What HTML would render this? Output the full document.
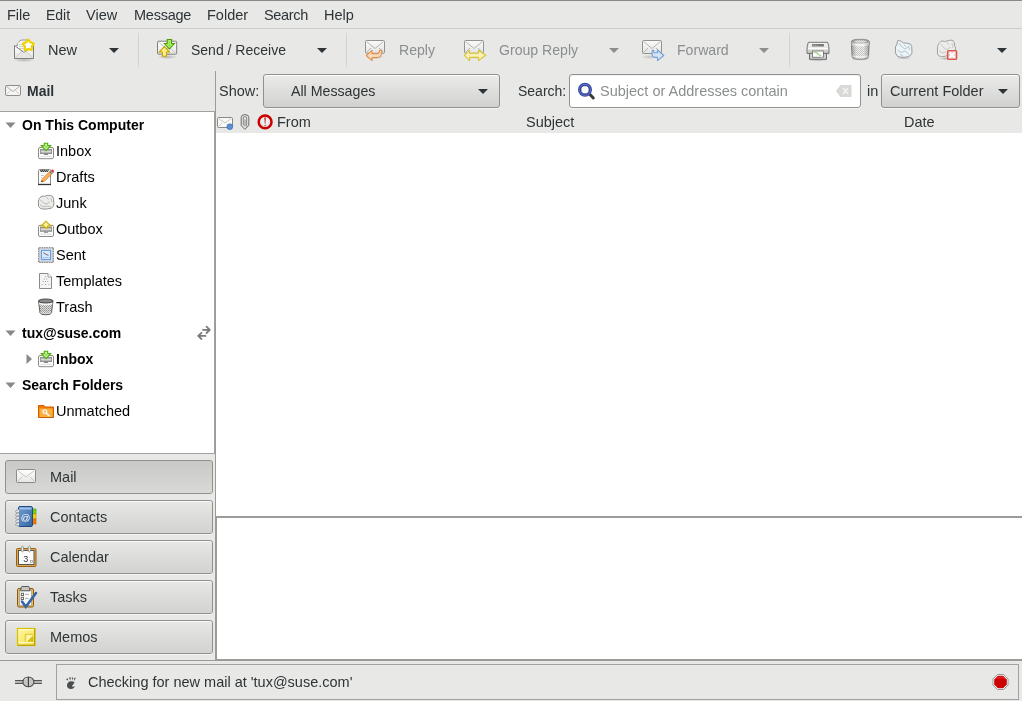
<!DOCTYPE html>
<html><head><meta charset="utf-8">
<style>
*{margin:0;padding:0;box-sizing:border-box}
html,body{width:1022px;height:701px;overflow:hidden;background:#e8e8e7;font-family:"Liberation Sans",sans-serif;font-size:14.5px;color:#2e3436}
.a{position:absolute}
svg.a{overflow:visible}
.t{position:absolute;white-space:nowrap;line-height:17px;will-change:transform}
.b{font-weight:bold;font-size:14px}
.dis{color:#8b8e8f;font-size:14.1px}
.k{color:#000}
.combo{position:absolute;border:1px solid #90928d;border-radius:3px;background:linear-gradient(#ebebea 0px,#e6e6e5 20%,#d1d1cf 100%);box-shadow:inset 0 1px 0 #fdfdfd,0 1px 0 rgba(255,255,255,.55)}
.btn{position:absolute;left:5px;width:208px;height:34px;border:1px solid #90928d;border-radius:3px;background:linear-gradient(#eaeae9,#e4e4e3 15%,#d2d2d0);box-shadow:inset 0 1px 0 #fbfbfb,0 1px 0 rgba(255,255,255,.55)}
.btn.on{background:linear-gradient(#c9c9c6,#d9d9d7);box-shadow:none}
.tri{position:absolute;width:0;height:0;border-left:5px solid transparent;border-right:5px solid transparent;border-top:5px solid #2e3436}
.tri.g{border-top-color:#8b8e8f}
</style></head><body>
<div class="a" style="left:0;top:0;width:1022px;height:1px;background:#8a8a8a"></div>
<!-- MENUBAR -->
<div class="t" style="left:7px;top:7px">File</div>
<div class="t" style="left:46px;top:7px;font-size:14px">Edit</div>
<div class="t" style="left:86px;top:7px">View</div>
<div class="t" style="left:134px;top:7px;letter-spacing:-0.25px">Message</div>
<div class="t" style="left:207px;top:7px">Folder</div>
<div class="t" style="left:264px;top:7px;letter-spacing:-0.35px">Search</div>
<div class="t" style="left:324px;top:7px">Help</div>
<div class="a" style="left:0;top:28px;width:1022px;height:1px;background:#cdcdcb"></div>

<!-- TOOLBAR -->
<div class="t" style="left:48px;top:42px">New</div>
<div class="tri" style="left:109px;top:48px"></div>
<div class="a" style="left:138px;top:33px;width:1px;height:34px;background:#d3d3d1"></div>
<div class="t" style="left:191px;top:42px;font-size:14px">Send / Receive</div>
<div class="tri" style="left:317px;top:48px"></div>
<div class="a" style="left:346px;top:33px;width:1px;height:34px;background:#d3d3d1"></div>
<div class="t dis" style="left:399px;top:42px">Reply</div>
<div class="t dis" style="left:499px;top:42px">Group Reply</div>
<div class="tri g" style="left:609px;top:48px"></div>
<div class="t dis" style="left:677px;top:42px">Forward</div>
<div class="tri g" style="left:759px;top:48px"></div>
<div class="a" style="left:789px;top:33px;width:1px;height:34px;background:#d3d3d1"></div>
<div class="tri" style="left:997px;top:48px"></div>

<!-- NEW icon: viewBox origin = (8,34) -->
<svg class="a" style="left:8px;top:34px" width="32" height="32" viewBox="0 0 32 32">
 <defs><linearGradient id="envg" x1="0" y1="0" x2="0" y2="1"><stop offset="0" stop-color="#ffffff"/><stop offset="1" stop-color="#e4e4e2"/></linearGradient>
 <radialGradient id="shd" cx="0.5" cy="0.5" r="0.5"><stop offset="0" stop-color="#000" stop-opacity=".22"/><stop offset="1" stop-color="#000" stop-opacity="0"/></radialGradient></defs>
 <ellipse cx="16" cy="26" rx="11" ry="2.2" fill="url(#shd)"/>
 <path d="M8.5 11.5 L12 6.5 Q13 6 15 6 L20 6 L22 8 L23.5 11.5 Z" fill="#f3f3f2" stroke="#9a9a98" stroke-width="1"/>
 <rect x="10" y="8.5" width="11" height="8" fill="#fafafa"/>
 <path d="M11 10.5 H19 M11 12.5 H19 M11 14.5 H17" stroke="#c8c8c6" stroke-width="0.8"/>
 <path d="M6.5 11.5 L16 18.5 L25.5 11.5 L25.5 24.5 L6.5 24.5 Z" fill="url(#envg)" stroke="#7f7f7d" stroke-width="1" stroke-linejoin="round"/>
 <path d="M7.5 23.5 L13.5 17.5 M24.5 23.5 L18.5 17.5" stroke="#c9c9c7" stroke-width="1"/>
 <path d="M10 22.5 L13 18.5 L19 18.5 L22 22.5 Z" fill="#e6e6e4"/>
 <path d="M20.30 5.80 L22.42 8.49 L25.63 9.67 L23.72 12.51 L23.59 15.93 L20.30 15.00 L17.01 15.93 L16.88 12.51 L14.97 9.67 L18.18 8.49 Z" fill="#fff" stroke="#edd400" stroke-width="2.4" stroke-linejoin="round"/>
 <path d="M20.30 7.20 L21.59 9.62 L24.29 10.10 L22.39 12.08 L22.77 14.80 L20.30 13.60 L17.83 14.80 L18.21 12.08 L16.31 10.10 L19.01 9.62 Z" fill="#fff"/>
</svg>
<!-- SEND/RECEIVE icon: origin (152,34) -->
<svg class="a" style="left:152px;top:34px" width="32" height="32" viewBox="0 0 32 32">
 <ellipse cx="15.5" cy="23" rx="10" ry="2.2" fill="url(#shd)"/>
 <rect x="5.5" y="7.2" width="19.2" height="13" rx="1" fill="url(#envg)" stroke="#7f7f7d" stroke-width="1"/>
 <path d="M6.5 8.2 L15 15 L23.7 8.2 M6.5 19.2 L12 14 M23.7 19.2 L18 14" fill="none" stroke="#bdbdbb" stroke-width="0.8"/>
 <path d="M15.2 5.5 L19.6 5.5 L19.6 9.5 L22.4 9.5 L17.4 15 L12.4 9.5 L15.2 9.5 Z" fill="#8ae234" stroke="#4e9a06" stroke-width="1.1" stroke-linejoin="miter"/><path d="M16.4 6.7 H18.4 V10.7 H19.8 L17.4 13.3 L15 10.7 H16.4 Z" fill="none" stroke="#c4f59a" stroke-width="0.7"/>
 <path d="M10.4 22.2 L14.4 22.2 L14.4 18 L17.4 18 L12.4 12.6 L7.4 18 L10.4 18 Z" fill="#fce94f" stroke="#c4a000" stroke-width="1.1" stroke-linejoin="miter"/><path d="M11.6 21 H13.2 V16.8 H14.7 L12.4 14.3 L10.1 16.8 H11.6 Z" fill="none" stroke="#fffbd0" stroke-width="0.7"/>
</svg>
<!-- REPLY icon: origin (358,34) -->
<svg class="a" style="left:358px;top:34px;opacity:.8" width="32" height="32" viewBox="0 0 32 32">
 <ellipse cx="17" cy="23" rx="10" ry="2" fill="url(#shd)"/>
 <rect x="7.5" y="6.5" width="19" height="12.8" rx="1" fill="url(#envg)" stroke="#7f7f7d" stroke-width="1"/>
 <path d="M8.5 7.5 L17 14.5 L25.5 7.5 M8.5 18.5 L13 14 M25.5 18.5 L21 14" fill="none" stroke="#a8a8a6" stroke-width="1"/>
 <path d="M8.3 21.5 L14 16.3 L14 19.6 L19.5 19.6 Q21.5 19.6 21.5 16.5 L23.8 16 Q24.2 23.6 19 23.6 L14 23.6 L14 26.6 Z" fill="#fcd9b4" stroke="#e07b2a" stroke-width="1.1" stroke-linejoin="round"/>
</svg>
<!-- GROUP REPLY icon: origin (458,34) -->
<svg class="a" style="left:458px;top:34px;opacity:.8" width="32" height="32" viewBox="0 0 32 32">
 <ellipse cx="16" cy="23" rx="10" ry="2" fill="url(#shd)"/>
 <rect x="6.5" y="6.5" width="19" height="12.8" rx="1" fill="url(#envg)" stroke="#7f7f7d" stroke-width="1"/>
 <path d="M7.5 7.5 L16 14.5 L24.5 7.5 M7.5 18.5 L12 14 M24.5 18.5 L20 14" fill="none" stroke="#a8a8a6" stroke-width="1"/>
 <path d="M6.3 21.3 L11.5 16.3 L11.5 19.3 L20.5 19.3 L20.5 16.3 L27.7 21.3 L20.5 26.6 L20.5 23.4 L11.5 23.4 L11.5 26.6 Z" fill="#fdf2a8" stroke="#d8bc10" stroke-width="1.1" stroke-linejoin="round"/>
</svg>
<!-- FORWARD icon: origin (636,34) -->
<svg class="a" style="left:636px;top:34px;opacity:.8" width="32" height="32" viewBox="0 0 32 32">
 <ellipse cx="14" cy="23" rx="9" ry="2" fill="url(#shd)"/>
 <rect x="6.5" y="6.5" width="19" height="13" rx="1" fill="url(#envg)" stroke="#7f7f7d" stroke-width="1"/>
 <path d="M7.5 7.5 L16 14.5 L24.5 7.5 M7.5 18.5 L12 14 M24.5 18.5 L20 14" fill="none" stroke="#a8a8a6" stroke-width="1"/>
 <path d="M27.8 21.5 L21.5 15.8 L21.5 18.8 L18.5 18.8 Q17.2 18.5 17.8 16.3 L16.2 16.5 Q15 23.4 19.5 23.4 L21.5 23.4 L21.5 26.6 Z" fill="#d2e2f6" stroke="#5b8fd6" stroke-width="1.1" stroke-linejoin="round"/>
</svg>
<!-- PRINT icon origin (800,34) -->
<svg class="a" style="left:800px;top:34px" width="80" height="32" viewBox="800 34 80 32">
 <defs>
  <linearGradient id="prg" x1="0" y1="0" x2="0" y2="1"><stop offset="0" stop-color="#f4f4f2"/><stop offset="0.5" stop-color="#e4e4e2"/><stop offset="1" stop-color="#b8b8b6"/></linearGradient>
  <pattern id="mesh" width="2" height="2" patternUnits="userSpaceOnUse"><rect width="2" height="2" fill="#ececea"/><rect width="1" height="1" fill="#c2c2c0"/><rect x="1" y="1" width="1" height="1" fill="#cacac8"/></pattern>
  <linearGradient id="trg" x1="0" y1="0" x2="1" y2="0"><stop offset="0" stop-color="#000" stop-opacity=".25"/><stop offset="0.3" stop-color="#000" stop-opacity="0"/><stop offset="0.7" stop-color="#000" stop-opacity="0"/><stop offset="1" stop-color="#000" stop-opacity=".25"/></linearGradient>
 </defs>
 <ellipse cx="818" cy="60" rx="10" ry="1.6" fill="url(#shd)"/>
 <path d="M809.5 53 H826.5 V59.3 H809.5 Z" fill="#d0d0ce" stroke="#6a6a68" stroke-width="1"/>
 <path d="M808.3 42.3 H827.7 Q829 46 829 49 V53.5 H807 V49 Q807 46 808.3 42.3 Z" fill="url(#prg)" stroke="#767674" stroke-width="1"/>
 <rect x="812" y="44" width="12" height="2.6" rx="0.5" fill="#7a7a78"/>
 <path d="M813.2 45.3 h0.8 M815.2 45.3 h0.8 M817.2 45.3 h0.8" stroke="#cfcfcd" stroke-width="0.9"/>
 <path d="M808 48.5 H828" stroke="#fbfbfa" stroke-width="1.6"/>
 <rect x="812.3" y="51" width="11" height="6.2" fill="#fafafa" stroke="#4a4a48" stroke-width="0.6"/>
 <path d="M813.5 52.2 L816.5 52.5 L818.5 54.5 L821 56" stroke="#9bd47a" stroke-width="1.1" fill="none"/>
 <rect x="820.6" y="57" width="1.8" height="1" fill="#8bb5e8"/>
</svg>
<!-- TRASH icon -->
<svg class="a" style="left:800px;top:34px" width="80" height="32" viewBox="800 34 80 32">
 <ellipse cx="860.3" cy="59" rx="9.5" ry="1.8" fill="url(#shd)"/>
 <path d="M851.3 42 Q851.3 39.3 860.3 39.3 Q869.3 39.3 869.3 42 L868.5 56.8 Q868.2 59.3 860.3 59.3 Q852.3 59.3 852.1 56.8 Z" fill="url(#mesh)" stroke="#8a8a88" stroke-width="1"/>
 <path d="M851.6 42 Q860.3 44.2 869 42 V45.6 Q860.3 47.2 851.6 45.6 Z" fill="#f4f4f2"/>
 <ellipse cx="860.3" cy="41.6" rx="8.2" ry="1.6" fill="url(#mesh)" stroke="#9a9a98" stroke-width="0.6"/>
 <path d="M852 56 Q860.3 58 868.5 56" stroke="#f4f4f2" stroke-width="1.5" fill="none"/>
 <path d="M851.3 42 Q851.3 39.3 860.3 39.3 Q869.3 39.3 869.3 42 L868.5 56.8 Q868.2 59.3 860.3 59.3 Q852.3 59.3 852.1 56.8 Z" fill="url(#trg)"/>
</svg>
<!-- JUNK icon -->
<svg class="a" style="left:880px;top:34px" width="80" height="32" viewBox="880 34 80 32">
 <ellipse cx="904" cy="58" rx="8" ry="1.6" fill="url(#shd)"/>
 <path d="M897.5 40.8 Q899.5 39.8 901 41.3 L903.5 43 Q907 42.8 910.5 44.2 Q912.3 46 911.8 49 L912 53 Q911 56.5 906 57.2 L900 57.2 Q896 56.5 895.6 53 L895.4 47 Q895.5 45.5 896.8 45.2 Z" fill="#eef3f5" stroke="#8e9496" stroke-width="0.9" stroke-linejoin="round"/>
 <path d="M899 43 L902 47 L905 49 L908 47 M897.5 50 L901 52.5 L905 51 L909 54 M904 45 L906 46.5 M900 54.5 L903 55.5 M908.5 45.5 L909.5 50" stroke="#9cc0d0" stroke-width="0.8" fill="none"/>
 <ellipse cx="946" cy="58.5" rx="8" ry="1.6" fill="url(#shd)"/>
 <path d="M941 41.3 Q943 40.5 944.5 41.5 L947 41 Q950.5 39.5 953 40.5 Q955 42.5 954.5 45 L955.5 48 Q956 52 953 54 L944 56.5 Q938.5 57 937.5 54 L937.4 49 Q937.4 45 939 43.3 Z" fill="#ececea" stroke="#9a9a98" stroke-width="0.9" stroke-linejoin="round"/>
 <path d="M941 44 L944 48 L947 49.5 L951 47 M939 51 L943 53 L946 52 M947 42.5 L949 45 M952 43 L953 48" stroke="#c0c0be" stroke-width="0.8" fill="none"/>
 <rect x="947.6" y="50.6" width="9" height="8.8" rx="1" fill="#f3c6c2" stroke="#d9534f" stroke-width="1.4"/>
 <path d="M949.5 52.5 L954.7 57.5 M954.7 52.5 L949.5 57.5" stroke="#fff" stroke-width="2"/>
</svg>

<!-- SIDEBAR -->
<svg class="a" style="left:5px;top:85px" width="16" height="11" viewBox="0 0 16 11"><rect x="0.5" y="0.5" width="15" height="10" rx="1" fill="#f4f4f3" stroke="#8e8e8c"/><path d="M1 1 L8 6.5 L15 1" fill="none" stroke="#b0b0ae"/><path d="M1 10 L5.5 5.5 M15 10 L10.5 5.5" stroke="#d0d0ce"/></svg>
<div class="t b" style="left:27px;top:83px">Mail</div>
<div class="a" style="left:0;top:111px;width:215px;height:1px;background:#a1a19f"></div>
<div class="a" style="left:0;top:112px;width:214px;height:341px;background:#fff"></div>
<div class="a" style="left:214px;top:112px;width:1px;height:342px;background:#a1a19f"></div>
<div class="a" style="left:0;top:453px;width:215px;height:1px;background:#a1a19f"></div>
<div class="a" style="left:215px;top:71px;width:1px;height:589px;background:#9a9c98"></div>

<div class="t b k" style="left:22px;top:117px">On This Computer</div>
<div class="t k" style="left:56px;top:143px">Inbox</div>
<div class="t k" style="left:56px;top:169px">Drafts</div>
<div class="t k" style="left:56px;top:195px">Junk</div>
<div class="t k" style="left:56px;top:221px">Outbox</div>
<div class="t k" style="left:56px;top:247px">Sent</div>
<div class="t k" style="left:56px;top:273px">Templates</div>
<div class="t k" style="left:56px;top:299px">Trash</div>
<div class="t b k" style="left:22px;top:325px">tux@suse.com</div>
<div class="t b k" style="left:56px;top:351px">Inbox</div>
<div class="t b k" style="left:22px;top:377px">Search Folders</div>
<div class="t k" style="left:56px;top:403px">Unmatched</div>

<svg class="a" style="left:0;top:100px" width="215" height="330" viewBox="0 100 215 330">
 <defs>
  <linearGradient id="trayg" x1="0" y1="0" x2="0" y2="1"><stop offset="0" stop-color="#fafafa"/><stop offset="1" stop-color="#dcdcda"/></linearGradient>
  <pattern id="mesh2" width="2" height="2" patternUnits="userSpaceOnUse"><rect width="2" height="2" fill="#e2e2e0"/><rect width="1" height="1" fill="#8e8e8c"/><rect x="1" y="1" width="1" height="1" fill="#a6a6a4"/></pattern>
 </defs>
 <!-- expanders -->
 <path d="M5.5 122.5 L15.5 122.5 L10.5 128 Z" fill="#888a85"/>
 <path d="M5.5 330.5 L15.5 330.5 L10.5 336 Z" fill="#888a85"/>
 <path d="M5.5 382.5 L15.5 382.5 L10.5 388 Z" fill="#888a85"/>
 <path d="M26.5 354 L32 359 L26.5 364 Z" fill="#888a85"/>
 <!-- Inbox -->
 <g id="inbox">
  <rect x="38.5" y="147.5" width="15" height="11.2" rx="1.5" fill="#fdfdfd" stroke="#8a8a88"/>
  <rect x="40" y="149" width="12" height="5" fill="#8e8e8c"/>
  <rect x="40.8" y="150.4" width="10.4" height="2.2" fill="#d6d6d4"/>
  <rect x="44" y="154" width="4" height="0.9" fill="#7a7a78"/>
  <path d="M40.5 156.3 H51.5" stroke="#d8d8d6" stroke-width="0.9"/>
  <path d="M44.3 143.3 H47.7 V145.6 H50.7 L46 150.6 L41.3 145.6 H44.3 Z" fill="#c6f2a0" stroke="#4fae0a" stroke-width="1.1"/>
  <circle cx="46" cy="147" r="1" fill="#8ae234"/>
 </g>
 <!-- Drafts -->
 <path d="M38.5 184.5 V170.5 Q38.5 169.5 40 169.5 H49.5 Q50.5 169.5 50.5 170.5 V184.5" fill="#fbfbfb" stroke="#8a8c88" stroke-width="1"/>
 <path d="M38 184.5 H51" stroke="#2e3436" stroke-width="1.3"/>
 <path d="M40.5 170 L41.3 172 L42.3 170 L43.3 172 L44.3 170 L45.3 172 L46.3 170 L47.3 172 L48.3 170" stroke="#3a3a38" stroke-width="1" fill="none"/>
 <path d="M41 175.5 H44 M41 177.5 H42" stroke="#b8b8b6" stroke-width="0.8"/>
 <path d="M41.3 182 L42.3 179 L49.5 171.8 L51.7 174 L44.5 181.2 Z" fill="#f9b360" stroke="#d46d10" stroke-width="0.7"/>
 <path d="M49.5 171.8 L51 170.3 L53.2 172.5 L51.7 174 Z" fill="#9a9a98" stroke="#6a6a68" stroke-width="0.5"/>
 <path d="M51 170.3 Q52.3 168.8 53.5 170 Q54.7 171.2 53.2 172.5 Z" fill="#ef2929"/>
 <path d="M41.3 182 L41.9 180.2 L43.1 181.4 Z" fill="#2e3436"/>
 <!-- Junk -->
 <path d="M40 197.5 Q42 195.3 44.5 196.3 L46.5 195.5 Q50 194.7 52.5 196.3 Q54.2 198.5 53.6 201 L54 203.5 Q54 207 51 208.3 L45 209.2 Q39.8 209.4 38.6 206.5 L38.4 202 Q38.3 199.3 40 197.5 Z" fill="#ececea" stroke="#8a8a86" stroke-width="0.9" stroke-linejoin="round"/>
 <path d="M40.5 200 L43.5 203 L47 204 L50 201.5 M40 205 L43.5 206.8 L47 206 L51 207 M46.5 197 L48.5 199.5 M51 198 L52 202" stroke="#b0b0ac" stroke-width="0.8" fill="none"/>
 <!-- Outbox -->
 <rect x="38.5" y="225.3" width="15" height="11.2" rx="1.5" fill="#fdfdfd" stroke="#8a8a88"/>
 <rect x="40" y="226.8" width="12" height="5" fill="#8e8e8c"/>
 <rect x="40.8" y="228.2" width="10.4" height="2.2" fill="#d6d6d4"/>
 <rect x="44" y="231.8" width="4" height="0.9" fill="#7a7a78"/>
 <path d="M40.5 234.1 H51.5" stroke="#d8d8d6" stroke-width="0.9"/>
 <path d="M44.3 227.6 H47.7 V226 H50.7 L46 221.2 L41.3 226 H44.3 Z" fill="#fdf3a0" stroke="#c8a800" stroke-width="1.1"/>
 <!-- Sent stamp -->
 <rect x="38" y="247" width="16" height="16" fill="#90908e"/>
 <rect x="39.5" y="248.5" width="13" height="13" fill="#fcfcfc"/>
 <circle cx="38.8" cy="247.2" r="0.55" fill="#fff"/><circle cx="38.8" cy="262.8" r="0.55" fill="#fff"/><circle cx="38.2" cy="247.8" r="0.55" fill="#fff"/><circle cx="53.8" cy="247.8" r="0.55" fill="#fff"/><circle cx="41.2" cy="247.2" r="0.55" fill="#fff"/><circle cx="41.2" cy="262.8" r="0.55" fill="#fff"/><circle cx="38.2" cy="250.2" r="0.55" fill="#fff"/><circle cx="53.8" cy="250.2" r="0.55" fill="#fff"/><circle cx="43.6" cy="247.2" r="0.55" fill="#fff"/><circle cx="43.6" cy="262.8" r="0.55" fill="#fff"/><circle cx="38.2" cy="252.6" r="0.55" fill="#fff"/><circle cx="53.8" cy="252.6" r="0.55" fill="#fff"/><circle cx="46.0" cy="247.2" r="0.55" fill="#fff"/><circle cx="46.0" cy="262.8" r="0.55" fill="#fff"/><circle cx="38.2" cy="255.0" r="0.55" fill="#fff"/><circle cx="53.8" cy="255.0" r="0.55" fill="#fff"/><circle cx="48.4" cy="247.2" r="0.55" fill="#fff"/><circle cx="48.4" cy="262.8" r="0.55" fill="#fff"/><circle cx="38.2" cy="257.4" r="0.55" fill="#fff"/><circle cx="53.8" cy="257.4" r="0.55" fill="#fff"/><circle cx="50.8" cy="247.2" r="0.55" fill="#fff"/><circle cx="50.8" cy="262.8" r="0.55" fill="#fff"/><circle cx="38.2" cy="259.8" r="0.55" fill="#fff"/><circle cx="53.8" cy="259.8" r="0.55" fill="#fff"/><circle cx="53.2" cy="247.2" r="0.55" fill="#fff"/><circle cx="53.2" cy="262.8" r="0.55" fill="#fff"/><circle cx="38.2" cy="262.2" r="0.55" fill="#fff"/><circle cx="53.8" cy="262.2" r="0.55" fill="#fff"/>
 <rect x="41.3" y="250.3" width="9.4" height="9.4" fill="#dbe8f7" stroke="#6b9de0" stroke-width="1.4"/>
 <path d="M43.3 252.6 L46.3 254.6 L48.5 255.2" stroke="#5a6a7a" stroke-width="1" fill="none"/>
 <path d="M42.5 257.6 H49.5" stroke="#a8c4e8" stroke-width="1.2"/>
 <!-- Templates -->
 <path d="M39.5 273.5 H48 L51.5 277 V288.5 H39.5 Z" fill="#f4f4f2" stroke="#8a8a88" stroke-width="1"/>
 <path d="M48 273.5 V277 H51.5" fill="#fff" stroke="#8a8a88" stroke-width="0.8"/>
 <rect x="45.0" y="276.0" width="1" height="1" fill="#a0a09e"/><rect x="43.8" y="278.5" width="1" height="1" fill="#a0a09e"/><rect x="46.2" y="278.5" width="1" height="1" fill="#a0a09e"/><rect x="42.7" y="281.0" width="1" height="1" fill="#a0a09e"/><rect x="45.0" y="281.0" width="1" height="1" fill="#a0a09e"/><rect x="47.3" y="281.0" width="1" height="1" fill="#a0a09e"/><rect x="41.5" y="284.0" width="1" height="1" fill="#a0a09e"/><rect x="45.0" y="284.0" width="1" height="1" fill="#a0a09e"/><rect x="48.5" y="284.0" width="1" height="1" fill="#a0a09e"/>
 <!-- Trash -->
 <path d="M38.6 301 L40 313 Q40.5 314.8 45.8 314.8 Q51 314.8 51.5 313 L52.9 301 Z" fill="url(#mesh2)" stroke="#4e4e4c" stroke-width="0.9"/>
 <ellipse cx="45.8" cy="301" rx="7.3" ry="2" fill="#8a8a88" stroke="#3e3e3c" stroke-width="0.9"/>
 <path d="M39.2 303.6 Q45.8 305.4 52.4 303.6" stroke="#f4f4f2" stroke-width="1.6" fill="none"/><path d="M40 312.8 Q45.8 314 51.6 312.8" stroke="#d8d8d6" stroke-width="1" fill="none"/>
 <!-- account sync arrows -->
 <path d="M203 329.8 H209.5 M206.5 326.7 L209.8 329.8 L206.5 333 M205.5 335.9 H198.5 M201.5 332.8 L198.2 335.9 L201.5 339" stroke="#7a7a7a" stroke-width="1.8" fill="none" stroke-linecap="round" stroke-linejoin="round"/>
 <!-- Inbox in account -->
 <use href="#inbox" y="208"/>
 <!-- Unmatched folder -->
 <path d="M38.5 405.5 H44 L45.5 407 H53.5 V417.5 H38.5 Z" fill="#f57900" stroke="#ce5c00" stroke-width="1"/>
 <rect x="39.5" y="408.5" width="13" height="8.5" fill="#fcaf3e"/>
 <circle cx="44.8" cy="411.6" r="2.2" fill="#fff" stroke="#fff" stroke-width="0.5"/>
 <circle cx="44.8" cy="411.6" r="1.2" fill="#f9b054"/>
 <path d="M46.5 413.3 L49 415.8" stroke="#fff" stroke-width="1.6" stroke-linecap="round"/>
</svg>

<!-- switcher -->
<div class="btn on" style="top:460px"></div>
<div class="btn" style="top:500px"></div>
<div class="btn" style="top:540px"></div>
<div class="btn" style="top:580px"></div>
<div class="btn" style="top:620px"></div>
<div class="t" style="left:50px;top:469px">Mail</div>
<div class="t" style="left:50px;top:509px">Contacts</div>
<div class="t" style="left:50px;top:549px">Calendar</div>
<div class="t" style="left:50px;top:589px">Tasks</div>
<div class="t" style="left:50px;top:629px">Memos</div>

<svg class="a" style="left:0;top:455px;will-change:transform" width="215" height="246" viewBox="0 455 215 246">
 <defs>
  <linearGradient id="envg2" x1="0" y1="0" x2="0" y2="1"><stop offset="0" stop-color="#fff"/><stop offset="1" stop-color="#e6e6e4"/></linearGradient>
  <linearGradient id="bookg" x1="0" y1="0" x2="1" y2="1"><stop offset="0" stop-color="#729fcf"/><stop offset="1" stop-color="#3465a4"/></linearGradient>
  <linearGradient id="memog" x1="0" y1="0" x2="1" y2="1"><stop offset="0" stop-color="#fff6a0"/><stop offset="1" stop-color="#f4e04a"/></linearGradient>
 </defs>
 <!-- mail -->
 <rect x="16.5" y="469.5" width="19" height="13" rx="1" fill="url(#envg2)" stroke="#8a8a88"/>
 <path d="M17.5 470.5 L26 477 L34.5 470.5 M17.5 481.5 L22.5 476.5 M34.5 481.5 L29.5 476.5" stroke="#c0c0be" stroke-width="0.9" fill="none"/>
 <!-- contacts -->
 <rect x="30" y="509" width="6" height="5" fill="#73d216" stroke="#4e9a06" stroke-width="0.6"/>
 <rect x="30" y="514" width="6" height="5" fill="#edd400" stroke="#c4a000" stroke-width="0.6"/>
 <rect x="30" y="519" width="6" height="5" fill="#f57900" stroke="#ce5c00" stroke-width="0.6"/>
 <rect x="18.5" y="506.5" width="14" height="20" rx="1.5" fill="url(#bookg)" stroke="#204a87" stroke-width="1"/>
 <rect x="19.5" y="507.5" width="12" height="2" fill="#9fc0e8"/>
 <path d="M19 509.5 Q15 510 15.5 512 Q16 513 19 512.5 M19 512.8 Q15 513.3 15.5 515.3 Q16 516.3 19 515.8 M19 516.1 Q15 516.6 15.5 518.6 Q16 519.6 19 519.1 M19 519.4 Q15 519.9 15.5 521.9 Q16 522.9 19 522.4 M19 522.7 Q15 523.2 15.5 525.2 Q16 526.2 19 525.7" stroke="#9a9a98" stroke-width="0.9" fill="#e6e6e4"/>
 <text x="25.6" y="520.6" font-family="Liberation Sans" font-size="9.5" fill="#fff" text-anchor="middle">@</text>
 <!-- calendar -->
 <rect x="16.5" y="548.5" width="19.5" height="18" rx="1" fill="#e0a85a" stroke="#9a6208" stroke-width="1"/>
 <rect x="18.5" y="550.5" width="15.5" height="14" fill="#fbfbfb" stroke="#555753" stroke-width="1"/>
 <text x="25.8" y="561.5" font-family="Liberation Sans" font-size="9" fill="#2e3436" text-anchor="middle">3</text>
 <ellipse cx="22.4" cy="549" rx="1.3" ry="3" fill="#e8e8e6" stroke="#7a7a78" stroke-width="0.7"/>
 <ellipse cx="29.4" cy="549" rx="1.3" ry="3" fill="#e8e8e6" stroke="#7a7a78" stroke-width="0.7"/>
 <rect x="30.5" y="560.5" width="2" height="2" fill="#fff" stroke="#888" stroke-width="0.6"/>
 <!-- tasks -->
 <rect x="17.5" y="588.5" width="16" height="18.5" rx="1.5" fill="#e9b96e" stroke="#8f5902" stroke-width="1"/>
 <rect x="19.5" y="590.5" width="12" height="15" fill="#fafafa" stroke="#8a8a88" stroke-width="0.6"/>
 <path d="M22 586.5 H28.5 Q29 586.5 29.2 587.2 L30 590.8 H20.5 L21.3 587.2 Q21.5 586.5 22 586.5 Z" fill="#c6c6c2" stroke="#4e4e4c" stroke-width="0.9"/>
 <rect x="21.3" y="593.3" width="2.2" height="2.2" fill="#fff" stroke="#6a6a68" stroke-width="1"/>
 <rect x="21.3" y="597.3" width="2.2" height="2.2" fill="#fff" stroke="#6a6a68" stroke-width="1"/>
 <path d="M25 594.4 H29 M25 598.4 H28.5" stroke="#a0a0a0" stroke-width="0.8"/>
 <path d="M22 601.5 L25.8 606.8 L36 593" stroke="#3465a4" stroke-width="2.6" fill="none" stroke-linejoin="miter" stroke-linecap="round"/>
 <!-- memos -->
 <rect x="17.5" y="628.5" width="17.5" height="17" fill="url(#memog)" stroke="#d9c000" stroke-width="1.2"/>
 <path d="M18.8 629.8 H33.7" stroke="#fffde0" stroke-width="1"/>
 <path d="M18.8 642.4 H33.7" stroke="#fffbd0" stroke-width="1"/>
 <path d="M34.6 629 V645.2 H18" stroke="#a08800" stroke-width="0.7" fill="none"/>
 <path d="M25.3 641.8 V634.3 H33.3" stroke="#d8c22a" stroke-width="0.9" fill="none"/>
 <path d="M26.3 641.8 L27 635.3 H33.3 Z" fill="#fff6b0"/>
 <path d="M27 641.8 L33.3 635.3 V641.8 Z" fill="#d6bc12"/>
 </svg>

<!-- RIGHT PANE -->
<div class="t" style="left:219px;top:83px">Show:</div>
<div class="combo" style="left:263px;top:74px;width:237px;height:34px"></div>
<div class="t" style="left:291px;top:83px;font-size:14.2px">All Messages</div>
<div class="tri" style="left:478px;top:89px"></div>
<div class="t" style="left:518px;top:83px;font-size:14px">Search:</div>
<div class="a" style="left:569px;top:74px;width:292px;height:34px;border:1px solid #90928d;border-radius:3px;background:#fff;box-shadow:inset 0 1px 1px rgba(0,0,0,.06),0 1px 0 rgba(255,255,255,.55)"></div>
<div class="t" style="left:600px;top:83px;color:#8b8e8f">Subject or Addresses contain</div>
<div class="t" style="left:867px;top:83px">in</div>
<div class="combo" style="left:881px;top:74px;width:139px;height:34px"></div>
<div class="t" style="left:890px;top:83px">Current Folder</div>
<div class="tri" style="left:998px;top:89px"></div>

<div class="t" style="left:277px;top:114px">From</div>
<div class="t" style="left:526px;top:114px">Subject</div>
<div class="t" style="left:904px;top:114px">Date</div>
<div class="a" style="left:216px;top:133px;width:806px;height:383px;background:#fff"></div>
<div class="a" style="left:216px;top:516px;width:806px;height:2px;background:#9a9c98"></div>
<div class="a" style="left:216px;top:518px;width:806px;height:141px;background:#fff"></div>
<div class="a" style="left:216px;top:516px;width:1px;height:143px;background:#9a9c98"></div>

<!-- STATUS -->
<div class="a" style="left:215px;top:659px;width:807px;height:1px;background:#9a9c98"></div>
<div class="a" style="left:0;top:660px;width:1022px;height:1px;background:#9a9c98"></div>
<div class="a" style="left:56px;top:664px;width:963px;height:36px;border:1px solid #a1a19f"></div>
<div class="t" style="left:88px;top:674px">Checking for new mail at 'tux@suse.com'</div>
<svg class="a" style="left:214px;top:110px" width="66" height="24" viewBox="214 110 66 24">
 <rect x="217.5" y="117.5" width="15" height="10" rx="1" fill="#f8f8f7" stroke="#888a85"/>
 <path d="M218.5 118.5 L225 123 L231.5 118.5 M218.5 126.5 L222 123" stroke="#bbb" stroke-width="0.8" fill="none"/>
 <circle cx="229.8" cy="126.7" r="2.9" fill="#5b8fd6" stroke="#3465a4" stroke-width="0.6"/>
 <path d="M244.8 129.3 L241.2 125.5 V117.5 Q241.2 114.6 245 114.6 Q248.8 114.6 248.8 117.5 V125.5 Z" fill="none" stroke="#6a6a68" stroke-width="1"/>
 <path d="M243.3 125.5 V118 Q243.3 116.6 245 116.6 Q246.7 116.6 246.7 118 V126.5 M245 126.5 V119.5" stroke="#7a7a78" stroke-width="0.9" fill="none"/>
 <defs><radialGradient id="exg" cx="0.5" cy="0.4" r="0.6"><stop offset="0" stop-color="#fafafa"/><stop offset="1" stop-color="#dcdcdc"/></radialGradient></defs>
 <circle cx="265.1" cy="121.9" r="6.4" fill="url(#exg)" stroke="#cc0000" stroke-width="2.5"/>
 <path d="M264.2 117.6 Q265.1 117 266 117.6 L265.4 124 H264.8 Z" fill="#c43a3a"/>
 <circle cx="265.1" cy="125.4" r="0.75" fill="#c43a3a"/>
</svg>
<!-- search magnifier -->
<svg class="a" style="left:572px;top:78px" width="28" height="24" viewBox="572 78 28 24">
 <path d="M590 94.5 L593.3 98" stroke="#3a3a38" stroke-width="3" stroke-linecap="round"/>
 <circle cx="585" cy="89.8" r="5.5" fill="#fafafa" stroke="#3548a8" stroke-width="3"/>
 <circle cx="585" cy="89.8" r="5.5" fill="none" stroke="#6a7ed0" stroke-width="0.8"/>
 <circle cx="585" cy="89.8" r="4.1" fill="none" stroke="#1e2a70" stroke-width="0.6"/>
</svg>
<!-- clear icon -->
<svg class="a" style="left:834px;top:83px" width="20" height="16" viewBox="834 83 20 16">
 <path d="M836 91 L840.5 85 H851.5 V97 H840.5 Z" fill="#d8d8d6"/>
 <path d="M843 88 L848 94 M848 88 L843 94" stroke="#f4f4f3" stroke-width="1.5"/>
</svg>
<!-- status connection icon -->
<svg class="a" style="left:10px;top:670px" width="38" height="24" viewBox="10 670 38 24">
 <rect x="15" y="680" width="27" height="4" fill="#b4b4b0"/>
 <path d="M15 680.5 H42 M15 683.5 H42" stroke="#555753" stroke-width="1"/>
 <ellipse cx="28.4" cy="681.9" rx="5.5" ry="4.9" fill="#c6c6c2" stroke="#4a4a48" stroke-width="1.1"/>
 <path d="M28.4 677 V686.8" stroke="#3e3e3c" stroke-width="1.1"/>
 <path d="M24.5 680 Q25 678.5 26.5 678" stroke="#e8e8e6" stroke-width="0.8" fill="none"/>
</svg>
<!-- gnome foot -->
<svg class="a" style="left:60px;top:672px" width="22" height="22" viewBox="60 672 22 22">
 <path d="M74.6 682.2 Q72 680.5 69.5 681.5 Q66.8 682.8 67 686 Q67.5 689 71 689 Q74 689 75 686 Q73.5 687.3 71.8 686.3 Q73.5 684 74.6 682.2 Z" fill="#4a4d4f"/>
 <path d="M65.8 679.2 L67.8 678.2 L68.3 680.8 Z" fill="#5a5c5e"/>
 <path d="M68.8 677.8 L70.8 677.3 L70.4 680.4 Z" fill="#5a5c5e"/>
 <path d="M71.6 677.8 L73.2 677.3 L72.6 680.6 Z" fill="#5a5c5e"/>
 <path d="M73.8 678.3 L75.8 677.6 L74.4 681 Z" fill="#5a5c5e"/>
</svg>
<!-- red stop -->
<svg class="a" style="left:990px;top:671px" width="21" height="21" viewBox="990 671 21 21">
 <path d="M997.4 674.5 H1003.6 L1008 678.9 V685.1 L1003.6 689.5 H997.4 L993 685.1 V678.9 Z" fill="#fff" stroke="#8a8a88" stroke-width="0.9"/>
 <path d="M997.9 675.7 H1003.1 L1006.8 679.4 V684.6 L1003.1 688.3 H997.9 L994.2 684.6 V679.4 Z" fill="#cc0000"/>
 <path d="M998 676.5 H1003 L1005.5 679 Q1000.5 678 996 679.5 Z" fill="#ef2929" opacity=".7"/>
</svg>

</body></html>
